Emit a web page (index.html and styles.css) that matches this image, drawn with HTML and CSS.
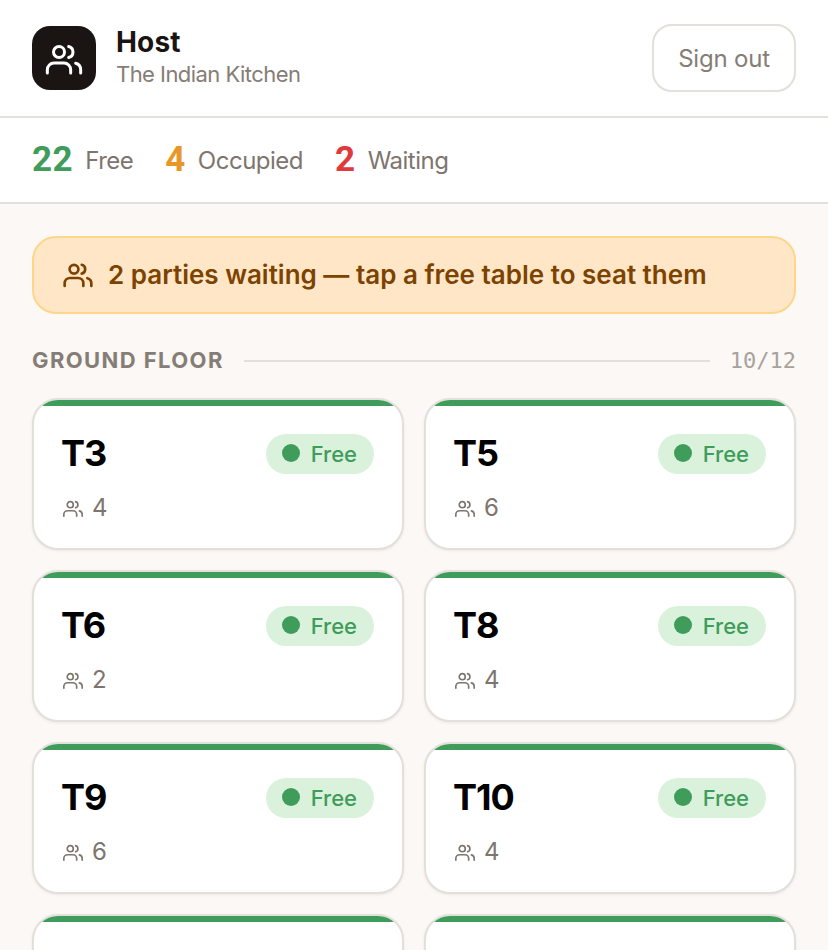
FILE: index.html
```html
<!DOCTYPE html>
<html lang="en">
<head>
<meta charset="utf-8">
<title>Host</title>
<link rel="stylesheet" href="styles.css">
</head>
<body>
<svg class="sprite" width="0" height="0" aria-hidden="true">
  <symbol id="users" viewBox="0 0 24 24">
    <path d="M16 21v-2a4 4 0 0 0-4-4H6a4 4 0 0 0-4 4v2"/>
    <circle cx="9" cy="8.4" r="3.3"/>
    <path d="M22 21v-2a4 4 0 0 0-3-3.87"/>
    <path d="M14.8 5.1a3.4 3.4 0 0 1 0 6.6"/>
  </symbol>
</svg>
<header class="topbar">
  <div class="brand">
    <div class="logo"><svg class="icon icon-logo"><use href="#users"/></svg></div>
    <div class="brand-text">
      <div class="brand-title">Host</div>
      <div class="brand-sub">The Indian Kitchen</div>
    </div>
  </div>
  <button class="signout">Sign out</button>
</header>
<section class="stats">
  <div class="stat"><span class="num green">22</span><span class="lab">Free</span></div>
  <div class="stat"><span class="num orange">4</span><span class="lab">Occupied</span></div>
  <div class="stat"><span class="num red">2</span><span class="lab">Waiting</span></div>
</section>
<main class="content">
  <div class="banner"><svg class="icon icon-banner"><use href="#users"/></svg><span class="banner-text">2 parties waiting — tap a free table to seat them</span></div>
  <div class="floor-head">
    <span class="floor-name">GROUND FLOOR</span>
    <span class="floor-line"></span>
    <span class="floor-count">10/12</span>
  </div>
  <div class="grid">
    <article class="card"><div class="card-top"><span class="tname">T3</span><span class="badge"><i class="dot"></i>Free</span></div><div class="seats"><svg class="icon icon-seat"><use href="#users"/></svg>4</div></article>
    <article class="card"><div class="card-top"><span class="tname">T5</span><span class="badge"><i class="dot"></i>Free</span></div><div class="seats"><svg class="icon icon-seat"><use href="#users"/></svg>6</div></article>
    <article class="card"><div class="card-top"><span class="tname">T6</span><span class="badge"><i class="dot"></i>Free</span></div><div class="seats"><svg class="icon icon-seat"><use href="#users"/></svg>2</div></article>
    <article class="card"><div class="card-top"><span class="tname">T8</span><span class="badge"><i class="dot"></i>Free</span></div><div class="seats"><svg class="icon icon-seat"><use href="#users"/></svg>4</div></article>
    <article class="card"><div class="card-top"><span class="tname">T9</span><span class="badge"><i class="dot"></i>Free</span></div><div class="seats"><svg class="icon icon-seat"><use href="#users"/></svg>6</div></article>
    <article class="card"><div class="card-top"><span class="tname">T10</span><span class="badge"><i class="dot"></i>Free</span></div><div class="seats"><svg class="icon icon-seat"><use href="#users"/></svg>4</div></article>
    <article class="card"></article>
    <article class="card"></article>
  </div>
</main>
</body>
</html>
```
FILE: styles.css
```css
* { box-sizing: border-box; }
html, body { margin: 0; height: 950px; overflow: hidden; }
body { background: #fcf8f5; color: #1a1512; font-family: Inter, "Liberation Sans", sans-serif; }
.sprite { display: block; height: 0; }
.icon { fill: none; stroke: currentColor; stroke-linecap: round; stroke-linejoin: round; stroke-width: 2; display: block; flex: none; }

.topbar { height: 118px; background: #fff; border-bottom: 2px solid #e3dfda; padding: 24px 32px 0; display: flex; justify-content: space-between; align-items: flex-start; }
.brand { display: flex; gap: 20px; padding-top: 2px; }
.logo { width: 64px; height: 64px; border-radius: 18px; background: #1a1512; color: #fff; display: flex; align-items: center; justify-content: center; }
.icon-logo { width: 40px; height: 40px; stroke-width: 1.8; }
.brand-title { font-size: 28px; font-weight: 700; line-height: 32px; letter-spacing: 0.2px; }
.brand-sub { font-size: 22px; line-height: 30px; margin-top: 1px; color: #857d76; letter-spacing: -0.55px; }
.signout { width: 144px; height: 68px; background: #fff; border: 2px solid #e3dfda; border-radius: 20px; font: 400 24px Inter, "Liberation Sans", sans-serif; color: #857d76; padding: 0; letter-spacing: -0.2px; }

.stats { height: 86px; background: #fff; border-bottom: 2px solid #e3dfda; padding: 0 32px; display: flex; align-items: center; gap: 32px; }
.stat { display: flex; align-items: center; gap: 12px; }
.num { font-family: Roboto, Inter, sans-serif; font-size: 35px; font-weight: 700; line-height: 40px; letter-spacing: 0.5px; }
.lab { font-size: 24px; color: #7d756e; letter-spacing: -0.5px; }
.green { color: #3f9c5a; }
.orange { color: #e8972a; }
.red { color: #e0393e; }

.content { padding: 32px 32px 0; }
.banner { height: 78px; background: #ffe6c7; border: 2px solid #fdd68a; border-radius: 24px; display: flex; align-items: center; gap: 14px; padding: 0 28px; color: #7c4300; font-size: 26px; font-weight: 600; }
.banner-text { margin-bottom: 2px; }
.icon-banner { width: 32px; height: 32px; margin-bottom: 2px; }
.floor-head { margin-top: 30px; height: 32px; display: flex; align-items: center; gap: 20px; }
.floor-name { font-size: 22px; font-weight: 700; color: #857d76; letter-spacing: 1.4px; }
.floor-line { flex: 1; height: 2px; margin-top: 2px; background: #e3dfda; }
.floor-count { font-family: "DejaVu Sans Mono", "Liberation Mono", monospace; font-size: 22px; line-height: 34px; margin-top: 2px; color: #a8a29b; }

.grid { margin-top: 22px; display: grid; grid-template-columns: 1fr 1fr; gap: 20px; }
.card { height: 152px; background: #fff; border: 2px solid #e3dfda; border-radius: 26px; padding: 0 28px; overflow: hidden; box-shadow: 0 1px 3px rgba(60, 50, 40, 0.08); }
.card::before { content: ""; display: block; height: 6px; margin: 0 -28px 28px; background: #3f9c5a; }
.card-top { display: flex; justify-content: space-between; align-items: center; height: 40px; }
.tname { font-size: 36px; font-weight: 700; color: #000; letter-spacing: -1px; margin: 0 0 2px -1px; }
.badge { height: 40px; border-radius: 20px; background: #daf2dc; color: #3f9c5a; font-size: 22px; font-weight: 500; display: flex; align-items: center; gap: 11px; padding: 0 17px 0 16px; }
.dot { width: 18px; height: 18px; border-radius: 50%; margin-bottom: 2px; background: #3f9c5a; }
.seats { margin-top: 19px; display: flex; align-items: center; gap: 8px; font-size: 24px; color: #7d756e; }
.icon-seat { width: 22px; height: 22px; stroke-width: 1.8; }
```
